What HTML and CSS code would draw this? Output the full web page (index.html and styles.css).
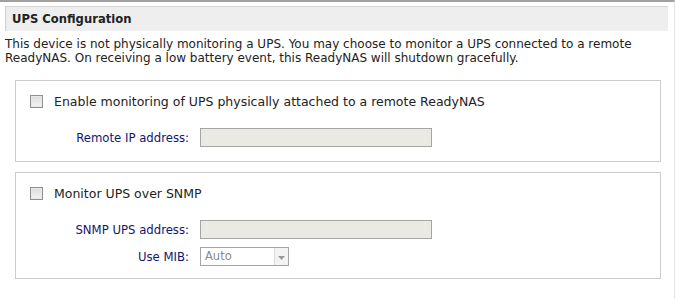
FILE: index.html
```html
<!DOCTYPE html>
<html>
<head>
<meta charset="utf-8">
<link rel="stylesheet" href="styles.css">
</head>
<body>
<div class="page">
  <div class="header">UPS Configuration</div>
  <p class="desc">This device is not physically monitoring a UPS. You may choose to monitor a UPS connected to a remote ReadyNAS. On receiving a low battery event, this ReadyNAS will shutdown gracefully.</p>
  <div class="box box1">
    <label class="check"><span class="cb"></span>Enable monitoring of UPS physically attached to a remote ReadyNAS</label>
    <div class="row"><span class="lbl">Remote IP address:</span><span class="input"></span></div>
  </div>
  <div class="box box2">
    <label class="check"><span class="cb"></span>Monitor UPS over SNMP</label>
    <div class="row"><span class="lbl">SNMP UPS address:</span><span class="input"></span></div>
    <div class="row row2"><span class="lbl">Use MIB:</span><span class="select"><span class="val">Auto</span><span class="arrow"><svg width="7" height="4" viewBox="0 0 7 4"><path d="M0 0H7L3.5 4Z" fill="#9a9a9a"/></svg></span></span></div>
  </div>
</div>
</body>
</html>
```
FILE: styles.css
```css
html, body { margin: 0; padding: 0; background: #fff; }
body { font-family: "DejaVu Sans", Verdana, sans-serif; font-size: 12px; color: #222; }
.page {
  width: 675px; height: 299px; box-sizing: border-box;
  border-top: 2px solid #a0a0a0; border-right: 1px solid #e4e4e4;
  padding: 4px 0 0 5px;
}
.header {
  width: 663px; height: 25px; box-sizing: border-box;
  background: #eeeeee; border-top: 1px solid #d4d4d4; border-left: 1px solid #d0d0d0;
  font-weight: bold; font-size: 11.6px; color: #222; line-height: 24px; padding-left: 6px;
}
.desc { margin: 6px 0 0 0; line-height: 14px; font-size: 12px; color: #222; width: 670px; }
.box {
  width: 646px; box-sizing: border-box;
  border: 1px solid #cccccc; padding: 0 0 0 14px; margin-left: 10px;
}
.box1 { height: 82px; margin-top: 15px; }
.box2 { height: 107px; margin-top: 10px; }
.check { display: flex; align-items: center; font-size: 12.5px; color: #222; height: 18px; margin-top: 11px; }
.cb {
  width: 11px; height: 11px; border: 1px solid #8f8f8f; background: linear-gradient(#dcdcdc, #f4f4f4);
  box-shadow: inset 0 0 0 1px #e8e8e8; margin-right: 11px; flex: none;
}
.row { display: flex; align-items: center; margin-top: 18px; height: 19px; }
.row2 { margin-top: 8px; }
.lbl { width: 170px; text-align: right; color: #14146e; font-size: 11.7px; padding-right: 11px; box-sizing: border-box; white-space: nowrap; }
.input { width: 232px; height: 19px; box-sizing: border-box; border: 1px solid #a5a5a5; background: #ebe9e4; }
.select {
  width: 89px; height: 19px; box-sizing: border-box; border: 1px solid #a5a5a5; background: #fff;
  display: flex; align-items: stretch;
}
.val { flex: 1; color: #8a8a8a; font-size: 11.5px; line-height: 17px; padding-left: 4px; }
.arrow { width: 14px; background: #f3f3f3; border-left: 1px solid #dcdcdc; display: flex; align-items: center; justify-content: center; padding-top: 2px; box-sizing: border-box; }
.arrow svg { display: block; }
```
